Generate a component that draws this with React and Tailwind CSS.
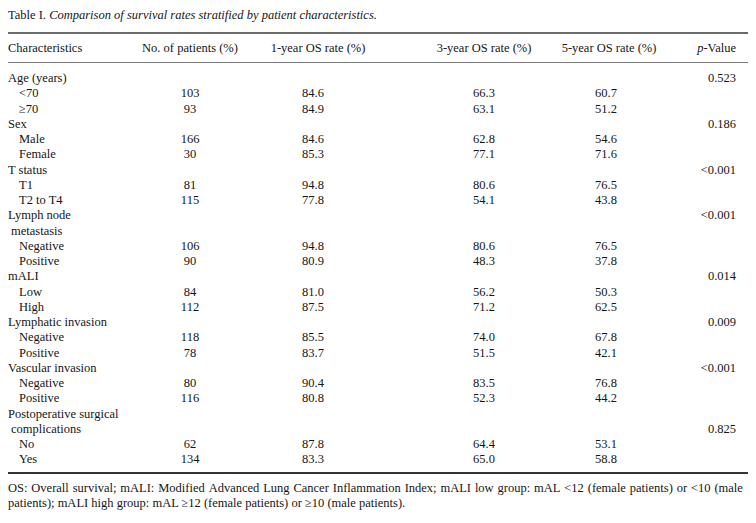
import React from 'react';

const rows = [
    { label: 'Age (years)', p: '0.523' },
    { label: '<70', sub: true, v: ['103', '84.6', '66.3', '60.7'] },
    { label: '≥70', sub: true, v: ['93', '84.9', '63.1', '51.2'] },
    { label: 'Sex', p: '0.186' },
    { label: 'Male', sub: true, v: ['166', '84.6', '62.8', '54.6'] },
    { label: 'Female', sub: true, v: ['30', '85.3', '77.1', '71.6'] },
    { label: 'T status', p: '<0.001' },
    { label: 'T1', sub: true, v: ['81', '94.8', '80.6', '76.5'] },
    { label: 'T2 to T4', sub: true, v: ['115', '77.8', '54.1', '43.8'] },
    { label: 'Lymph node', p: '<0.001' },
    { label: 'metastasis', cont: true },
    { label: 'Negative', sub: true, v: ['106', '94.8', '80.6', '76.5'] },
    { label: 'Positive', sub: true, v: ['90', '80.9', '48.3', '37.8'] },
    { label: 'mALI', p: '0.014' },
    { label: 'Low', sub: true, v: ['84', '81.0', '56.2', '50.3'] },
    { label: 'High', sub: true, v: ['112', '87.5', '71.2', '62.5'] },
    { label: 'Lymphatic invasion', p: '0.009' },
    { label: 'Negative', sub: true, v: ['118', '85.5', '74.0', '67.8'] },
    { label: 'Positive', sub: true, v: ['78', '83.7', '51.5', '42.1'] },
    { label: 'Vascular invasion', p: '<0.001' },
    { label: 'Negative', sub: true, v: ['80', '90.4', '83.5', '76.8'] },
    { label: 'Positive', sub: true, v: ['116', '80.8', '52.3', '44.2'] },
    { label: 'Postoperative surgical' },
    { label: 'complications', cont: true, p: '0.825' },
    { label: 'No', sub: true, v: ['62', '87.8', '64.4', '53.1'] },
    { label: 'Yes', sub: true, v: ['134', '83.3', '65.0', '58.8'] },
];

const grid = 'grid grid-cols-[122px_120px_126px_216px_28px_128px]';

function Center({ children }) {
    return <div className="flex justify-center whitespace-nowrap">{children}</div>;
}

function Right({ children }) {
    return <div className="flex justify-end whitespace-nowrap pr-3">{children}</div>;
}

export default function App() {
    return (
        <div className="w-[756px] h-[523px] bg-white px-2 text-[12.5px] text-[#161616] font-['Liberation_Serif',serif]">
            <div className="pt-[7px] leading-[16px]">
                Table I. <i>Comparison of survival rates stratified by patient characteristics.</i>
            </div>

            <div className="mt-[9px] border-t-2 border-[#6b6b6b]" />
            <div className={`${grid} h-[28px] items-center`}>
                <div className="whitespace-nowrap">Characteristics</div>
                <Center>No. of patients (%)</Center>
                <Center><span className="pl-[10px]">1-year OS rate (%)</span></Center>
                <Center>3-year OS rate (%)</Center>
                <Center><span className="pl-[6px]">5-year OS rate (%)</span></Center>
                <Right><span><i>p</i>-Value</span></Right>
            </div>
            <div className="border-t-[1.5px] border-[#7a7a7a]" />

            <div className="pt-[8px] pb-[4px]">
                {rows.map((r, i) => (
                    <div key={i} className={`${grid} h-[15.25px] items-center leading-[15px]`}>
                        <div className={`whitespace-nowrap ${r.sub ? 'pl-[11px]' : r.cont ? 'pl-[3px]' : ''}`}>{r.label}</div>
                        {r.v ? (
                            <>
                                <Center>{r.v[0]}</Center>
                                <Center>{r.v[1]}</Center>
                                <Center>{r.v[2]}</Center>
                                <Center>{r.v[3]}</Center>
                            </>
                        ) : (
                            <>
                                <div />
                                <div />
                                <div />
                                <div />
                            </>
                        )}
                        <Right>{r.p || ''}</Right>
                    </div>
                ))}
            </div>
            <div className="border-t-2 border-[#333]" />

            <div className="mt-[7px] leading-[15px] pr-[5px]">
                <div className="whitespace-nowrap flex justify-between">
                    {'OS: Overall survival; mALI: Modified Advanced Lung Cancer Inflammation Index; mALI low group: mAL <12 (female patients) or <10 (male'.split(' ').map((w, i) => (
                        <span key={i}>{w}</span>
                    ))}
                </div>
                <div>patients); mALI high group: mAL ≥12 (female patients) or ≥10 (male patients).</div>
            </div>
        </div>
    );
}
